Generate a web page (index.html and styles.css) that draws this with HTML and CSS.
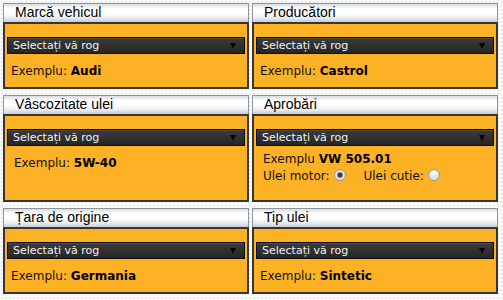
FILE: index.html
```html
<!DOCTYPE html>
<html lang="ro">

<head>
    <meta charset="UTF-8">
    <meta name="viewport" content="width=device-width, initial-scale=1.0">
    <title>Căutare ulei</title>
    <link rel="stylesheet" href="styles.css">
</head>

<body>
    <div class="filters">
        <div class="panel">
            <div class="panel-title">Marcă vehicul</div>
            <div class="panel-body">
                <div class="select-wrap">
                    <select>
                        <option>Selectați vă rog</option>
                    </select>
                </div>
                <p class="example">Exemplu: <strong>Audi</strong></p>
            </div>
        </div>

        <div class="panel">
            <div class="panel-title">Producători</div>
            <div class="panel-body">
                <div class="select-wrap">
                    <select>
                        <option>Selectați vă rog</option>
                    </select>
                </div>
                <p class="example">Exemplu: <strong>Castrol</strong></p>
            </div>
        </div>

        <div class="panel">
            <div class="panel-title">Vâscozitate ulei</div>
            <div class="panel-body tall">
                <div class="select-wrap">
                    <select>
                        <option>Selectați vă rog</option>
                    </select>
                </div>
                <p class="example indent mid">Exemplu: <strong>5W-40</strong></p>
            </div>
        </div>

        <div class="panel">
            <div class="panel-title">Aprobări</div>
            <div class="panel-body tall">
                <div class="select-wrap">
                    <select>
                        <option>Selectați vă rog</option>
                    </select>
                </div>
                <p class="example indent close">Exemplu <strong>VW 505.01</strong></p>
                <div class="example indent oil-type">
                    <label>Ulei motor: <input type="radio" name="oil" checked></label>
                    <label>Ulei cutie: <input type="radio" name="oil"></label>
                </div>
            </div>
        </div>

        <div class="panel">
            <div class="panel-title">Țara de origine</div>
            <div class="panel-body">
                <div class="select-wrap">
                    <select>
                        <option>Selectați vă rog</option>
                    </select>
                </div>
                <p class="example">Exemplu: <strong>Germania</strong></p>
            </div>
        </div>

        <div class="panel">
            <div class="panel-title">Tip ulei</div>
            <div class="panel-body">
                <div class="select-wrap">
                    <select>
                        <option>Selectați vă rog</option>
                    </select>
                </div>
                <p class="example">Exemplu: <strong>Sintetic</strong></p>
            </div>
        </div>
    </div>
</body>

</html>
```

FILE: styles.css
```css
body {
    margin: 0;
    padding: 3px 0 0 3px;
    font-family: "DejaVu Sans", Verdana, sans-serif;
    font-size: 12px;
    color: #111;
    background-color: #fafafa;
    background-image: radial-gradient(#ececec 1px, transparent 1px);
    background-size: 4px 4px;
}

.filters {
    display: grid;
    grid-template-columns: 246px 246px;
    column-gap: 3px;
    row-gap: 6px;
}

.panel-title {
    height: 19px;
    box-sizing: border-box;
    padding-left: 11px;
    border: 1px solid #8d949c;
    border-bottom: none;
    background: linear-gradient(#d9dbdf 0%, #ffffff 25%, #ffffff 50%, #eceef0 75%, #c9ccd1 100%);
    font-family: "Liberation Sans", Arial, sans-serif;
    font-size: 14px;
    line-height: 17px;
    color: #000;
}

.panel-body {
    height: 67px;
    box-sizing: border-box;
    padding: 13px 2px 0;
    border: 2px solid #363636;
    background: #fdb124;
}

.panel-body.tall {
    height: 88px;
}

.select-wrap {
    position: relative;
}

.select-wrap::after {
    content: "";
    position: absolute;
    right: 9px;
    top: 6px;
    border-left: 3.5px solid transparent;
    border-right: 3.5px solid transparent;
    border-top: 6px solid #050505;
    pointer-events: none;
}

select {
    appearance: none;
    -webkit-appearance: none;
    display: block;
    width: 100%;
    height: 17px;
    margin: 0;
    padding: 0 0 0 5px;
    border: 1px solid #0c0c0c;
    border-radius: 0;
    box-shadow: inset 0 1px 0 #4a4a4a;
    background: linear-gradient(#3b3b3b, #262626);
    color: #f2f2f2;
    font-family: "DejaVu Sans", Verdana, sans-serif;
    font-size: 11px;
    line-height: 15px;
}

.example {
    margin: 9px 0 0;
    padding-left: 4px;
    line-height: 16px;
}

.example strong {
    color: #000;
}

.example.indent {
    padding-left: 7px;
}

.example.mid {
    margin-top: 9px;
}

.example.close {
    margin-top: 5px;
    line-height: 17px;
}

.oil-type {
    margin-top: 0;
    display: flex;
    align-items: center;
    gap: 18px;
    line-height: 17px;
}

.oil-type label {
    display: flex;
    align-items: center;
    gap: 4px;
}

.oil-type input {
    appearance: none;
    -webkit-appearance: none;
    width: 12px;
    height: 12px;
    margin: 0 0 3px;
    border: 1px solid #9c9c9c;
    border-radius: 50%;
    background: radial-gradient(circle at 50% 35%, #fafafa, #cfcfcf);
}

.oil-type input:checked {
    background: radial-gradient(circle, #3a3a3a 0, #3a3a3a 2px, #8a8a8a 2.6px, #e6e6e6 3.5px, #d0d0d0 100%);
}
```
